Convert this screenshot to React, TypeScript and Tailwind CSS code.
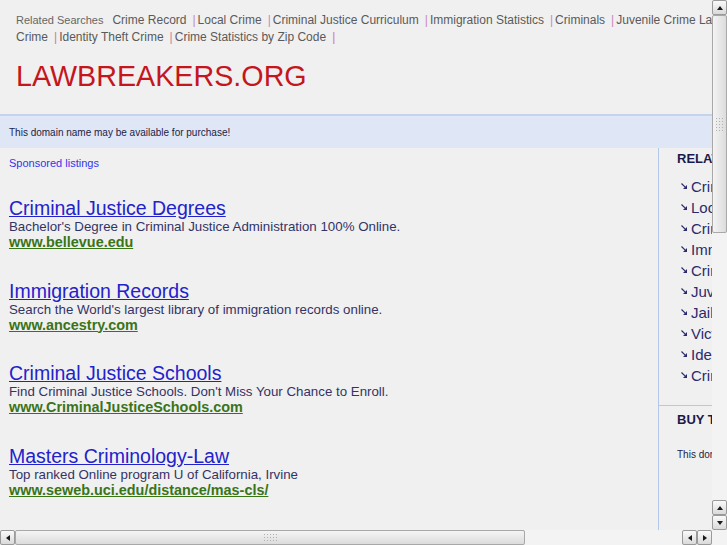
const topLine1 = [
  "Crime Record",
  "Local Crime",
  "Criminal Justice Curriculum",
  "Immigration Statistics",
  "Criminals",
  "Juvenile Crime Law",
  "Jail Inmates",
  "Victims of",
];
const topLine2 = ["Crime", "Identity Theft Crime", "Crime Statistics by Zip Code"];

const listings = [
  {
    title: "Criminal Justice Degrees",
    desc: "Bachelor's Degree in Criminal Justice Administration 100% Online.",
    url: "www.bellevue.edu",
  },
  {
    title: "Immigration Records",
    desc: "Search the World's largest library of immigration records online.",
    url: "www.ancestry.com",
  },
  {
    title: "Criminal Justice Schools",
    desc: "Find Criminal Justice Schools. Don't Miss Your Chance to Enroll.",
    url: "www.CriminalJusticeSchools.com",
  },
  {
    title: "Masters Criminology-Law",
    desc: "Top ranked Online program U of California, Irvine",
    url: "www.seweb.uci.edu/distance/mas-cls/",
  },
];

const related = [
  "Crime Record",
  "Local Crime",
  "Criminal Justice Curriculum",
  "Immigration Statistics",
  "Criminals",
  "Juvenile Crime Law",
  "Jail Inmates",
  "Victims of Crime",
  "Identity Theft Crime",
  "Crime Statistics by Zip Code",
];

function SmallArrow() {
  return (
    <svg width="6" height="6" viewBox="0 0 6 6" className="shrink-0">
      <path d="M0.5 0.5 L4.2 4.2" stroke="#2b2b6b" strokeWidth="1.2" />
      <polygon points="6,6 6,2 2,6" fill="#2b2b6b" />
    </svg>
  );
}

function Tri({ dir }: { dir: "up" | "down" | "left" | "right" }) {
  const pts = {
    up: "1,6 4,2 7,6",
    down: "1,2 4,6 7,2",
    left: "6,1 2,4 6,7",
    right: "2,1 6,4 2,7",
  }[dir];
  return (
    <svg width="8" height="8" viewBox="0 0 8 8">
      <polygon points={pts} fill="#1a1a1a" />
    </svg>
  );
}

function SbButton({ dir }: { dir: "up" | "down" | "left" | "right" }) {
  return (
    <div className="w-[15px] h-[15px] shrink-0 flex items-center justify-center rounded-[2px] border border-[#9a9a9a] bg-gradient-to-b from-[#fafafa] to-[#dadada]">
      <Tri dir={dir} />
    </div>
  );
}

function Grip({ vertical }: { vertical?: boolean }) {
  return (
    <div className={`grid gap-[2px] ${vertical ? "grid-cols-3" : "grid-cols-5"}`}>
      {Array.from({ length: 15 }).map((_, i) => (
        <div key={i} className="w-[1px] h-[1px] bg-[#b0b0b0]" />
      ))}
    </div>
  );
}

export default function App() {
  return (
    <div
      className="w-[727px] h-[545px] overflow-hidden bg-[#f0f0f0] flex flex-col"
      style={{ fontFamily: '"Liberation Sans", Arial, sans-serif' }}
    >
      <div className="flex h-[530px]">
        {/* page */}
        <div className="w-[712px] h-[530px] overflow-hidden flex flex-col">
          <div className="pt-[12px] pl-[16px] h-[114px]">
            <div className="whitespace-nowrap text-[12px] leading-[17px] text-[#5a5a5a]">
              <span className="text-[11px] text-[#666] mr-[9px]">Related Searches</span>
              {topLine1.map((t, i) => (
                <span key={t}>
                  {i > 0 && <span className="text-[#c58ac0] ml-[6px] mr-[2px]">|</span>}
                  {t}
                </span>
              ))}
            </div>
            <div className="whitespace-nowrap text-[12px] leading-[17px] text-[#5a5a5a]">
              {topLine2.map((t) => (
                <span key={t}>
                  {t}
                  <span className="text-[#d07a9a] ml-[6px] mr-[2px]">|</span>
                </span>
              ))}
            </div>
            <div className="mt-[15px] text-[28.7px] leading-[30px] text-[#c4161c]">LAWBREAKERS.ORG</div>
          </div>

          <div className="h-[34px] border-t-2 border-[#c5d3ec] bg-[#dfe6f5] pl-[9px] flex items-center text-[10px] text-[#222244]">
            This domain name may be available for purchase!
          </div>

          <div className="flex flex-1">
            <div className="w-[659px] shrink-0 border-r border-[#b3c8ea] pl-[9px] pt-[8px]">
              <div className="text-[11px] leading-[14px] text-[#3333ee]">Sponsored listings</div>
              <div className="mt-[27px]">
                {listings.map((l) => (
                  <div key={l.title} className="mb-[28.5px]">
                    <div className="text-[19.5px] leading-[22px] text-[#2222cc] underline">{l.title}</div>
                    <div className="text-[13.3px] leading-[15px] text-[#333366]">{l.desc}</div>
                    <div className="text-[14.4px] leading-[17px] font-bold text-[#3a7418] underline">{l.url}</div>
                  </div>
                ))}
              </div>
            </div>

            <div className="flex-1 overflow-hidden whitespace-nowrap">
              <div className="border-b border-[#b3c8ea] pl-[18px] pt-[3px] pb-[18px]">
                <div className="text-[13px] leading-[16px] font-bold text-[#1a1a4a]">RELATED SEARCHES</div>
                <div className="mt-[10px] pl-[4px]">
                  {related.map((r) => (
                    <div key={r} className="flex items-center gap-[4px] h-[21px] text-[15px] text-[#2b2b6b]">
                      <span className="-mt-[4px]">
                        <SmallArrow />
                      </span>
                      {r}
                    </div>
                  ))}
                </div>
              </div>
              <div className="pl-[18px] pt-[6px]">
                <div className="text-[13px] leading-[16px] font-bold text-[#1a1a4a]">BUY THIS DOMAIN</div>
                <div className="mt-[20px] text-[10px] leading-[13px] text-[#222244]">
                  This domain may be for sale
                </div>
              </div>
            </div>
          </div>
        </div>

        {/* vertical scrollbar */}
        <div className="w-[15px] h-[530px] flex flex-col bg-[#e9e9e9]">
          <SbButton dir="up" />
          <div className="h-[218px] shrink-0 border border-[#a8a8a8] rounded-[2px] bg-gradient-to-r from-[#f4f4f4] to-[#dcdcdc] flex items-center justify-center">
            <Grip vertical />
          </div>
          <div className="flex-1 bg-[#f3f3f3]" />
          <SbButton dir="up" />
          <SbButton dir="down" />
        </div>
      </div>

      {/* horizontal scrollbar */}
      <div className="flex h-[15px]">
        <div className="w-[712px] flex bg-[#e9e9e9]">
          <SbButton dir="left" />
          <div className="w-[510px] shrink-0 border border-[#a8a8a8] rounded-[2px] bg-gradient-to-b from-[#f4f4f4] to-[#dcdcdc] flex items-center justify-center">
            <Grip />
          </div>
          <div className="flex-1 bg-[#f3f3f3]" />
          <SbButton dir="left" />
          <SbButton dir="right" />
        </div>
        <div className="w-[15px] bg-[#f3f3f3]" />
      </div>
    </div>
  );
}
